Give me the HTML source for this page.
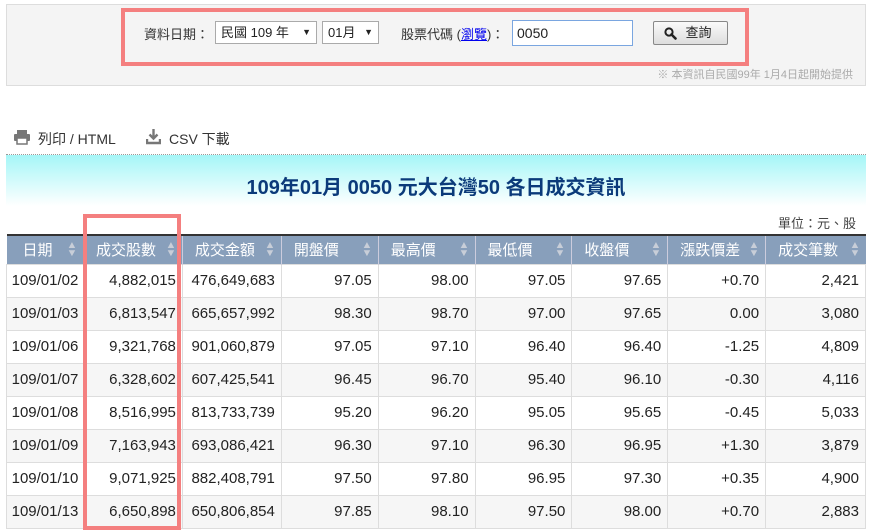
<!DOCTYPE html>
<html><head><meta charset="utf-8"><style>
*{box-sizing:border-box;margin:0;padding:0}
html,body{width:872px;height:531px;overflow:hidden}
body{background:#fff;font-family:"Liberation Sans","Noto Sans CJK TC",sans-serif;color:#222;position:relative}
.abs{position:absolute}
.topbox{left:6px;top:4px;width:860px;height:82px;background:#f4f4f4;border:1px solid #ddd}
.red{border:4px solid #f47f7f}
.sel{background:#fff;border:1px solid #aaa;font-size:13px;line-height:21px;padding-left:5px;height:23px}
.sel b{position:absolute;right:5px;top:0;font-size:9px}
table{position:absolute;left:6px;top:234px;width:860px;border-collapse:collapse;font-size:15px}
th{background:#889fbb;color:#fff;font-weight:normal;height:29px;border-left:1px solid #ccd;border-top:2px solid #333;position:relative;font-size:15px;text-align:left;padding-left:12px}
th:first-child{border-left:none;padding-left:16px}
th i{position:absolute;right:6px;top:6px;font-style:normal;font-size:10px;line-height:8px;color:#c8ced8;transform:scaleX(1.1)}
td{height:33px;border:1px solid #ddd;text-align:right;padding-right:6px}
td:first-child{text-align:center;padding:0}
tr:nth-child(odd) td{background:#f6f6f6}
</style></head><body>
<div class="abs topbox"></div>
<div class="abs red" style="left:121px;top:8px;width:628px;height:58px"></div>
<div class="abs" style="left:144px;top:24px;font-size:13px;color:#333">資料日期：</div>
<div class="abs sel" style="left:215px;top:21px;width:102px">民國 109 年<b>▼</b></div>
<div class="abs sel" style="left:322px;top:21px;width:57px">01月<b>▼</b></div>
<div class="abs" style="left:401px;top:24px;font-size:13px;color:#333">股票代碼 (<span style="color:#00e;text-decoration:underline">瀏覽</span>)：</div>
<div class="abs" style="left:512px;top:20px;width:121px;height:26px;background:#fff;border:1px solid #7aa6e0;font-size:14px;line-height:24px;padding-left:4px">0050</div>
<div class="abs" style="left:653px;top:21px;width:75px;height:24px;border:1px solid #888;border-radius:2px;background:linear-gradient(#fafafa,#ddd);font-size:13px;line-height:22px;text-align:center;padding-left:16px">查詢
<svg class="abs" style="left:10px;top:5px" width="13" height="13" viewBox="0 0 13 13"><circle cx="5" cy="5" r="3.6" fill="none" stroke="#222" stroke-width="2"/><path d="M7.5 7.5L11.5 11.5" stroke="#222" stroke-width="2.6" stroke-linecap="round"/></svg></div>
<div class="abs" style="right:19px;top:66px;font-size:11px;color:#aaa">※ 本資訊自民國99年 1月4日起開始提供</div>
<svg class="abs" style="left:13px;top:129px" width="18" height="16" viewBox="0 0 18 16"><rect x="4" y="1" width="10" height="5" fill="#777"/><rect x="1" y="5" width="16" height="7" rx="1" fill="#777"/><rect x="4" y="9" width="10" height="6" fill="#fff" stroke="#777" stroke-width="1.5"/></svg>
<div class="abs" style="left:38px;top:129px;font-size:14px;color:#333">列印 / HTML</div>
<svg class="abs" style="left:146px;top:128px" width="15" height="17" viewBox="0 0 15 17"><path d="M7.5 1V10M3.5 6.5L7.5 10.5L11.5 6.5" fill="none" stroke="#777" stroke-width="2.4"/><path d="M1 11V15H14V11" fill="none" stroke="#777" stroke-width="2.4"/></svg>
<div class="abs" style="left:169px;top:129px;font-size:14px;color:#333">CSV 下載</div>
<div class="abs" style="left:6px;top:154px;width:860px;height:52px;border-top:1px dotted #999;background:linear-gradient(#a5f6f7,#fff)"></div>
<div class="abs" style="left:6px;top:171px;width:860px;text-align:center;font-size:20px;font-weight:bold;color:#0b3a7a">109年01月 0050 元大台灣50 各日成交資訊</div>
<div class="abs" style="right:16px;top:213px;font-size:13px;color:#444">單位：元、股</div>
<table>
<colgroup><col style="width:77px"><col style="width:99px"><col style="width:99px"><col style="width:97px"><col style="width:97px"><col style="width:97px"><col style="width:96px"><col style="width:98px"><col style="width:100px"></colgroup>
<tr><th>日期<i>▲<br>▼</i></th><th>成交股數<i>▲<br>▼</i></th><th>成交金額<i>▲<br>▼</i></th><th>開盤價<i>▲<br>▼</i></th><th>最高價<i>▲<br>▼</i></th><th>最低價<i>▲<br>▼</i></th><th>收盤價<i>▲<br>▼</i></th><th>漲跌價差<i>▲<br>▼</i></th><th>成交筆數<i>▲<br>▼</i></th></tr>
<tr><td>109/01/02</td><td>4,882,015</td><td>476,649,683</td><td>97.05</td><td>98.00</td><td>97.05</td><td>97.65</td><td>+0.70</td><td>2,421</td></tr>
<tr><td>109/01/03</td><td>6,813,547</td><td>665,657,992</td><td>98.30</td><td>98.70</td><td>97.00</td><td>97.65</td><td>0.00</td><td>3,080</td></tr>
<tr><td>109/01/06</td><td>9,321,768</td><td>901,060,879</td><td>97.05</td><td>97.10</td><td>96.40</td><td>96.40</td><td>-1.25</td><td>4,809</td></tr>
<tr><td>109/01/07</td><td>6,328,602</td><td>607,425,541</td><td>96.45</td><td>96.70</td><td>95.40</td><td>96.10</td><td>-0.30</td><td>4,116</td></tr>
<tr><td>109/01/08</td><td>8,516,995</td><td>813,733,739</td><td>95.20</td><td>96.20</td><td>95.05</td><td>95.65</td><td>-0.45</td><td>5,033</td></tr>
<tr><td>109/01/09</td><td>7,163,943</td><td>693,086,421</td><td>96.30</td><td>97.10</td><td>96.30</td><td>96.95</td><td>+1.30</td><td>3,879</td></tr>
<tr><td>109/01/10</td><td>9,071,925</td><td>882,408,791</td><td>97.50</td><td>97.80</td><td>96.95</td><td>97.30</td><td>+0.35</td><td>4,900</td></tr>
<tr><td>109/01/13</td><td>6,650,898</td><td>650,806,854</td><td>97.85</td><td>98.10</td><td>97.50</td><td>98.00</td><td>+0.70</td><td>2,883</td></tr>
</table>
<div class="abs red" style="left:83px;top:214px;width:98px;height:316px"></div>
</body></html>
